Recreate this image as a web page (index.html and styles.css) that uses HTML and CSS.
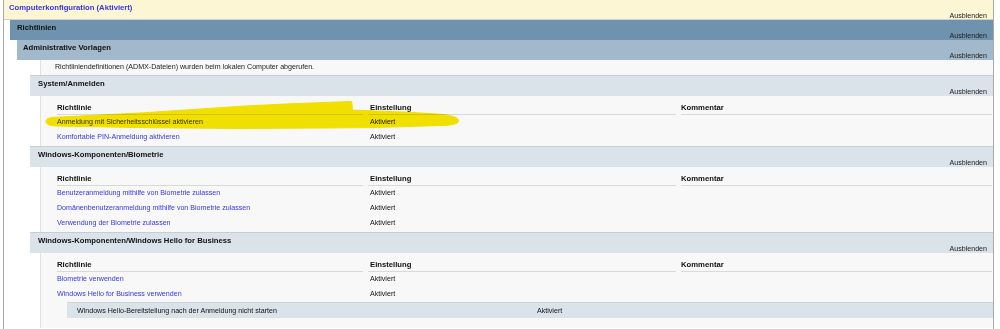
FILE: index.html
```html
<!DOCTYPE html>
<html lang="de">
<head>
<meta charset="utf-8">
<title>Computerkonfiguration</title>
<link rel="stylesheet" href="styles.css">
</head>
<body>
<div class="frame">
  <div class="bar bar-top"><span class="t link">Computerkonfiguration (Aktiviert)</span><span class="hide">Ausblenden</span></div>
  <div class="lvl1">
    <div class="bar bar-1"><span class="t">Richtlinien</span><span class="hide">Ausblenden</span></div>
    <div class="lvl2">
      <div class="bar bar-2"><span class="t">Administrative Vorlagen</span><span class="hide">Ausblenden</span></div>
      <div class="lvl3">
        <div class="desc">Richtliniendefinitionen (ADMX-Dateien) wurden beim lokalen Computer abgerufen.</div>

        <div class="bar bar-3"><span class="t">System/Anmelden</span><span class="hide">Ausblenden</span></div>
        <div class="content">
          <div class="grid">
            <div class="th">Richtlinie</div><div class="th c2">Einstellung</div><div class="th c3">Kommentar</div>
            <div class="td link">Anmeldung mit Sicherheitsschlüssel aktivieren</div><div class="td c2">Aktiviert</div><div class="td"></div>
            <div class="td link">Komfortable PIN-Anmeldung aktivieren</div><div class="td c2">Aktiviert</div><div class="td"></div>
          </div>
        </div>

        <div class="bar bar-3"><span class="t">Windows-Komponenten/Biometrie</span><span class="hide">Ausblenden</span></div>
        <div class="content">
          <div class="grid">
            <div class="th">Richtlinie</div><div class="th c2">Einstellung</div><div class="th c3">Kommentar</div>
            <div class="td link">Benutzeranmeldung mithilfe von Biometrie zulassen</div><div class="td c2">Aktiviert</div><div class="td"></div>
            <div class="td link">Domänenbenutzeranmeldung mithilfe von Biometrie zulassen</div><div class="td c2">Aktiviert</div><div class="td"></div>
            <div class="td link">Verwendung der Biometrie zulassen</div><div class="td c2">Aktiviert</div><div class="td"></div>
          </div>
        </div>

        <div class="bar bar-3"><span class="t">Windows-Komponenten/Windows Hello for Business</span><span class="hide">Ausblenden</span></div>
        <div class="content content-last">
          <div class="grid">
            <div class="th">Richtlinie</div><div class="th c2">Einstellung</div><div class="th c3">Kommentar</div>
            <div class="td link">Biometrie verwenden</div><div class="td c2">Aktiviert</div><div class="td"></div>
            <div class="td link">Windows Hello for Business verwenden</div><div class="td c2">Aktiviert</div><div class="td"></div>
          </div>
          <div class="sub"><span class="sub-name">Windows Hello-Bereitstellung nach der Anmeldung nicht starten</span><span>Aktiviert</span></div>
        </div>
      </div>
    </div>
  </div>
</div>
<svg class="hl" width="1000" height="329" viewBox="0 0 1000 329" aria-hidden="true">
  <path d="M46,121.5 C46,119 48.5,117.8 52,117.4 L90,115.5 L140,113 L190,109.7 L240,106.3 L290,103.8 L351.7,101.4 L352.5,110 L406.7,112.2 L440,114.2 C452,115.3 459,117.5 458.5,121 C458,124.2 452,125.3 440,125.5 L373,127.6 L240,128.6 L140,127.6 L56.7,126 C49.5,125.8 46,124.2 46,121.5 Z"/>
</svg>
</body>
</html>
```

FILE: styles.css
```css
html, body {
  margin: 0;
  padding: 0;
  background: #ffffff;
}

body {
  position: relative;
  height: 329px;
  overflow: hidden;
  font-family: "Liberation Sans", Arial, sans-serif;
  font-size: 7.1px;
  color: #111111;
}

.frame {
  margin-left: 3px;
  width: 989px;
  min-height: 329px;
  border-left: 1px solid #a9a9a9;
  border-right: 1px solid #a9a9a9;
  background: #ffffff;
}

.link {
  color: #3636e2;
}

.bar {
  display: flex;
  flex-direction: column;
  box-sizing: border-box;
  height: 20px;
  padding: 3px 6px 0 7px;
}

.bar .t {
  font-weight: bold;
  font-size: 7.7px;
  line-height: 10px;
  white-space: nowrap;
}

.bar .hide {
  align-self: flex-end;
  line-height: 7px;
  color: #222222;
}

.bar-top {
  background: #fdf6d5;
  border-bottom: 1px solid #cfcfcf;
  padding-left: 5px;
}

.lvl1 {
  margin-left: 6px;
}

.bar-1 {
  background: #6f93ae;
  padding-left: 7px;
}

.lvl2 {
  margin-left: 7px;
}

.bar-2 {
  background: #a2b9cb;
  padding-left: 6px;
}

.lvl3 {
  margin-left: 13px;
}

.desc {
  margin-left: 10px;
  background: #f8f8f8;
  border-left: 1px solid #e2e2e2;
  line-height: 15px;
  padding-left: 14px;
  color: #222222;
}

.bar-3 {
  height: 21px;
  background: #dae3ea;
  border-top: 1px solid #c7cdd2;
  padding-left: 8px;
}

.content {
  margin-left: 10px;
  background: #f8f8f8;
  border-left: 1px solid #e2e2e2;
  padding: 5px 0 1px 16px;
}

.content-last {
  padding-bottom: 10px;
}

.grid {
  display: grid;
  grid-template-columns: 311px 313px 1fr;
}

.th {
  font-weight: bold;
  font-size: 7.7px;
  line-height: 13px;
  border-bottom: 1px solid #d9d9d9;
  margin-right: 5px;
  color: #111111;
}

.th.c3 {
  margin-right: 1px;
}

.td {
  line-height: 15px;
  white-space: nowrap;
}

.c2 {
  padding-left: 2px;
}

.sub {
  display: flex;
  margin: 0 0 0 10px;
  height: 16px;
  line-height: 16px;
  padding-left: 10px;
  background: #dae3ea;
  border-top: 1px solid #cfd6db;
  box-sizing: border-box;
}

.sub-name {
  width: 460px;
  flex: none;
}

.hl {
  position: absolute;
  left: 0;
  top: 0;
  pointer-events: none;
  mix-blend-mode: multiply;
}

.hl path {
  fill: #f8e600;
  stroke: #f8e600;
  stroke-width: 1;
  stroke-linejoin: round;
}
```
